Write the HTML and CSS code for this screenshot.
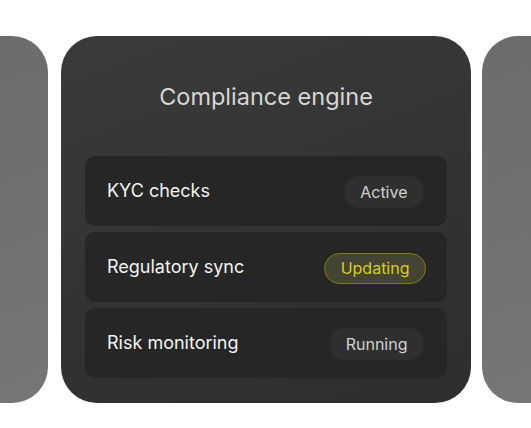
FILE: index.html
```html
<!DOCTYPE html>
<html lang="en">
<head>
<meta charset="utf-8">
<title>Compliance engine</title>
<link rel="stylesheet" href="styles.css">
</head>
<body>
<div class="stage">
  <div class="side-card side-left"></div>
  <section class="card">
    <h2 class="title">Compliance engine</h2>
    <div class="rows">
      <div class="row">
        <span class="label">KYC checks</span>
        <span class="pill">Active</span>
      </div>
      <div class="row">
        <span class="label">Regulatory sync</span>
        <span class="pill pill-updating">Updating</span>
      </div>
      <div class="row">
        <span class="label">Risk monitoring</span>
        <span class="pill">Running</span>
      </div>
    </div>
  </section>
  <div class="side-card side-right"></div>
</div>
</body>
</html>
```
FILE: styles.css
```css
* { box-sizing: border-box; }
html, body { margin: 0; padding: 0; background: #ffffff; }
body {
  width: 531px;
  height: 428px;
  overflow: hidden;
  font-family: Inter, "Liberation Sans", sans-serif;
}
.stage {
  display: flex;
  padding-top: 36px;
  width: 531px;
}
.side-card {
  height: 367px;
  background: linear-gradient(160deg, #6c6c6c, #767676);
}
.side-left {
  flex: 0 0 48px;
  border-radius: 0 36px 36px 0;
}
.side-right {
  flex: 1 1 auto;
  border-radius: 36px 0 0 36px;
}
.card {
  flex: 0 0 410px;
  height: 367px;
  margin: 0 11px 0 13px;
  border-radius: 36px;
  background: linear-gradient(160deg, #3b3b3b 0%, #323232 60%, #2e2e2e 100%);
  padding: 0 24px 25px;
  display: flex;
  flex-direction: column;
}
.title {
  margin: 0;
  height: 120px;
  display: flex;
  align-items: center;
  justify-content: center;
  font-size: 23.5px;
  font-weight: 400;
  color: #d6d6d6;
}
.rows {
  display: flex;
  flex-direction: column;
  gap: 6px;
}
.row {
  height: 70px;
  border-radius: 10px;
  background: #262626;
  display: flex;
  align-items: center;
  justify-content: space-between;
  padding: 0 23px 0 22px;
}
.label {
  font-size: 18px;
  color: #f2f2f2;
  margin-top: -2px;
}
.pill {
  height: 32px;
  padding: 0 16.5px;
  border-radius: 16px;
  background: #2f2f2f;
  color: #cfcfcf;
  font-size: 16px;
  display: flex;
  align-items: center;
  margin-top: 2px;
}
.pill-updating {
  background: #434532;
  border: 1.5px solid #7f7c1a;
  color: #d8ce1a;
  height: 31px;
  padding: 0 15.5px;
  margin-right: -2px;
}
```
